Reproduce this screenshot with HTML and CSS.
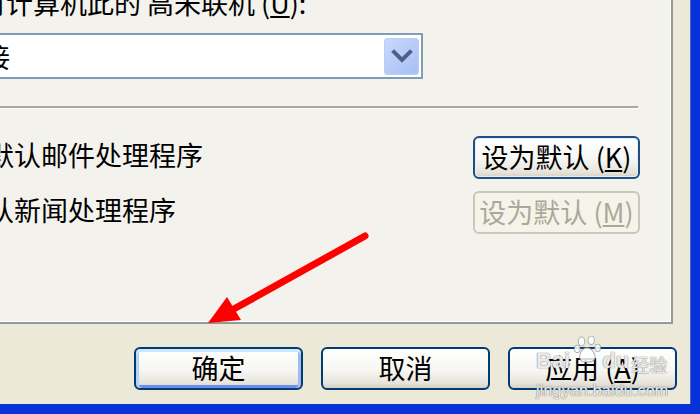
FILE: index.html
```html
<!DOCTYPE html>
<html lang="zh-CN">
<head>
<meta charset="utf-8">
<title>选项</title>
<link rel="stylesheet" href="styles.css">
</head>
<body>
<div class="window">
  <div class="panel">
    <p class="label">时计算机此的 高未联机 (<u>U</u>):</p>

    <div class="combo">
      <span class="combo-text">连接</span>
      <span class="combo-btn">
        <svg width="22" height="14" viewBox="0 0 22 14">
          <polyline points="3,3 11,11 19,3" fill="none" stroke="#4d6185"
            stroke-width="4" stroke-linecap="square"/>
        </svg>
      </span>
    </div>

    <div class="rule"></div>

    <div class="row">
      <span class="row-text">默认邮件处理程序</span>
      <button class="btn focus">设为默认 (<u>K</u>)</button>
    </div>
    <div class="row">
      <span class="row-text">认新闻处理程序</span>
      <button class="btn" disabled>设为默认 (<u>M</u>)</button>
    </div>
  </div> <!-- end panel -->

  <div class="actions">
    <button class="btn wide default">确定</button>
    <button class="btn wide">取消</button>
    <button class="btn wide">应用 (<u>A</u>)</button>
  </div>
</div> <!-- end window -->

<!-- red pointer drawn over the dialog -->
<svg class="arrow" width="700" height="414" viewBox="0 0 700 414">
  <line x1="365" y1="236" x2="232" y2="310" stroke="#f00"
    stroke-width="7" stroke-linecap="round"/>
  <polygon points="208,323 227,297 241,320" fill="#f00"/>
</svg>

<!-- watermark of the source site -->
<div class="watermark">
  <div class="wm-top">
    <span class="wm-word">Bai</span>
    <svg class="paw" width="28" height="28" viewBox="0 0 26 26">
      <g fill="rgba(255,255,255,0.85)" stroke="rgba(150,150,150,0.7)" stroke-width="1">
        <ellipse cx="7" cy="5" rx="3" ry="4"/>
        <ellipse cx="16" cy="4" rx="3" ry="4"/>
        <ellipse cx="3" cy="12" rx="2.6" ry="3.4"/>
        <ellipse cx="22" cy="11" rx="2.6" ry="3.4"/>
        <path d="M12 11 C7 11 4 18 6 22 C8 25 16 25 19 22 C21 18 17 11 12 11 Z"/>
      </g>
    </svg>
    <span class="wm-word">du</span>
    <span class="wm-cn">经验</span>
  </div>
  <div class="wm-url">jingyan.baidu.com</div>
</div>
</body>
</html>
```

FILE: styles.css
```css
body {
  margin: 0;
  width: 700px;
  height: 414px;
  overflow: hidden;
  background: #0831d9;
  font-family: "Noto Sans CJK SC", "DejaVu Sans", sans-serif;
  font-size: 27px;
  color: #000;
  position: relative;
}

.window {
  width: 690px;
  height: 404px;
  background: #ece9d8;
  border-right: 1px solid #3d6ad8;
  overflow: hidden;
}

/* the tab page */
.panel {
  width: 671px;
  height: 322px;
  background: #f3f2ec;
  border-right: 2px solid #919b9c;
  border-bottom: 2px solid #919b9c;
  box-shadow: inset 0 -1px 0 #fff, inset -1px 0 0 #fff;
  overflow: hidden;
}

.label {
  margin: -11px 0 0 -21px;
  line-height: 27px;
  white-space: nowrap;
}

.combo {
  display: flex;
  align-items: center;
  justify-content: space-between;
  margin: 17px 0 0 -10px;
  width: 427px;
  height: 42px;
  background: #fff;
  border: 2px solid #7f9db9;
  padding: 0 2px 0 0;
  overflow: hidden;
}
.combo-text {
  margin-left: -36px;
  line-height: 27px;
  white-space: nowrap;
}
.combo-btn {
  display: flex;
  align-items: center;
  justify-content: center;
  width: 33px;
  height: 35px;
  border: 1px solid #bccdf6;
  border-radius: 3px;
  background: linear-gradient(135deg, #c9d9fd, #b4c9f8 60%, #a7bff5);
}

.rule {
  width: 638px;
  height: 2px;
  margin-top: 27px;
  background: #aca899;
  border-bottom: 1px solid #fff;
}

.row {
  display: flex;
  align-items: center;
  justify-content: space-between;
  width: 640px;
  margin-top: 12px;
}
.rule + .row {margin-top: 27px;}
.row-text {
  margin-left: -13px;
  margin-top: -6px;
  white-space: nowrap;
}

.btn {
  font: inherit;
  color: #000;
  height: 43px;
  width: 167px;
  padding: 0 0 3px;
  line-height: 27px;
  border: 2px solid #003c74;
  border-radius: 6px;
  background: linear-gradient(#ffffff, #f6f6f2 55%, #e6e3da 88%, #d6d0c5);
  white-space: nowrap;
}
.btn.focus {
  border-color: #1d4f86;
  box-shadow: inset 0 0 0 1px #e7eef8;
}
.btn:disabled {
  color: #aca899;
  border-color: #cac8bb;
  background: #f5f4ea;
}
.btn.wide {width: 169px;}
.btn.default {
  box-shadow: inset 0 3px 0 #cee7ff, inset 3px 0 0 #b8d2f6,
    inset -3px 0 0 #a0bcef, inset 0 -3px 0 #6d8ee6;
}

.actions {
  display: flex;
  gap: 18px;
  margin: 23px 0 0 134px;
}

.arrow {
  position: absolute;
  left: 0;
  top: 0;
  pointer-events: none;
}

.watermark {
  position: absolute;
  left: 536px;
  top: 334px;
  width: 134px;
  font-family: "Liberation Sans", "Noto Sans CJK SC", sans-serif;
  color: rgba(255, 255, 255, 0.85);
  text-shadow: 0 0 1px rgba(120, 120, 120, 0.9), 0 0 1px rgba(120, 120, 120, 0.9);
  pointer-events: none;
}
.wm-top {
  display: flex;
  align-items: flex-end;
  height: 40px;
}
.wm-word {
  font-size: 22px;
  font-weight: bold;
  line-height: 22px;
  margin-bottom: 2px;
}
.paw {
  align-self: flex-start;
  margin: 2px 0 0 4px;
}
.wm-cn {
  font-family: "Noto Sans CJK SC", sans-serif;
  font-size: 18px;
  line-height: 20px;
  margin-left: 2px;
}
.wm-url {
  font-size: 16px;
  line-height: 16px;
  margin-top: 9px;
  letter-spacing: 0.2px;
}
```
